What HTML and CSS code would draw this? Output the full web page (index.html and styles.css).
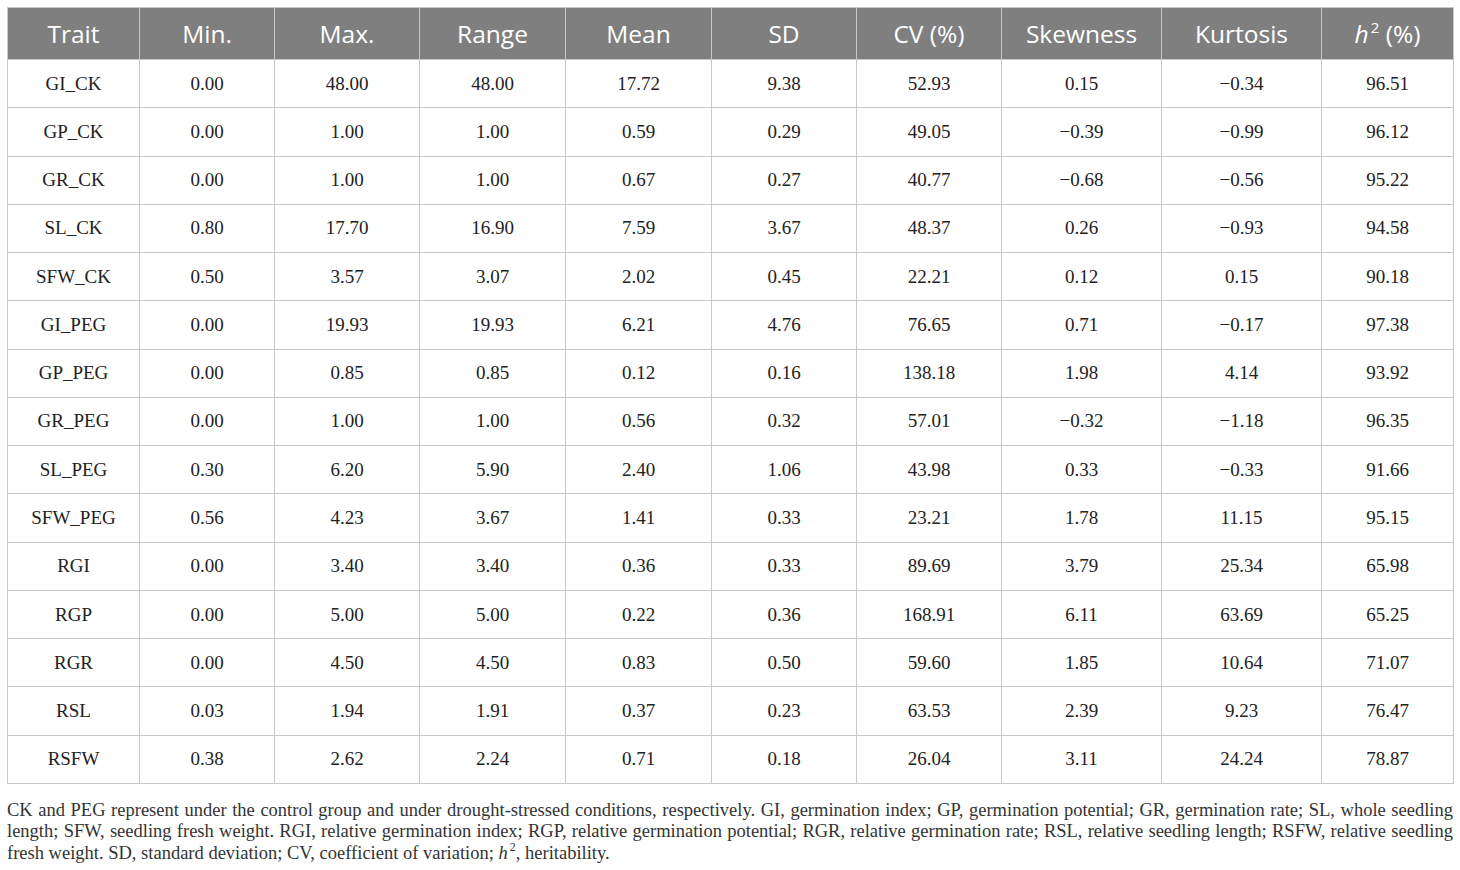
FILE: index.html
```html
<!DOCTYPE html>
<html>
<head>
<meta charset="utf-8">
<link rel="stylesheet" href="styles.css">
</head>
<body>
<div class="wrap">
<table class="stats">
<colgroup>
<col class="c-trait"><col class="c-min"><col class="c-max"><col class="c-range"><col class="c-mean"><col class="c-sd"><col class="c-cv"><col class="c-skew"><col class="c-kurt"><col class="c-h2">
</colgroup>
<thead>
<tr><th>Trait</th><th>Min.</th><th>Max.</th><th>Range</th><th>Mean</th><th>SD</th><th>CV (%)</th><th>Skewness</th><th>Kurtosis</th><th><i>h</i><sup>2</sup> (%)</th></tr>
</thead>
<tbody>
<tr><td>GI_CK</td><td>0.00</td><td>48.00</td><td>48.00</td><td>17.72</td><td>9.38</td><td>52.93</td><td>0.15</td><td>−0.34</td><td>96.51</td></tr>
<tr><td>GP_CK</td><td>0.00</td><td>1.00</td><td>1.00</td><td>0.59</td><td>0.29</td><td>49.05</td><td>−0.39</td><td>−0.99</td><td>96.12</td></tr>
<tr><td>GR_CK</td><td>0.00</td><td>1.00</td><td>1.00</td><td>0.67</td><td>0.27</td><td>40.77</td><td>−0.68</td><td>−0.56</td><td>95.22</td></tr>
<tr><td>SL_CK</td><td>0.80</td><td>17.70</td><td>16.90</td><td>7.59</td><td>3.67</td><td>48.37</td><td>0.26</td><td>−0.93</td><td>94.58</td></tr>
<tr><td>SFW_CK</td><td>0.50</td><td>3.57</td><td>3.07</td><td>2.02</td><td>0.45</td><td>22.21</td><td>0.12</td><td>0.15</td><td>90.18</td></tr>
<tr><td>GI_PEG</td><td>0.00</td><td>19.93</td><td>19.93</td><td>6.21</td><td>4.76</td><td>76.65</td><td>0.71</td><td>−0.17</td><td>97.38</td></tr>
<tr><td>GP_PEG</td><td>0.00</td><td>0.85</td><td>0.85</td><td>0.12</td><td>0.16</td><td>138.18</td><td>1.98</td><td>4.14</td><td>93.92</td></tr>
<tr><td>GR_PEG</td><td>0.00</td><td>1.00</td><td>1.00</td><td>0.56</td><td>0.32</td><td>57.01</td><td>−0.32</td><td>−1.18</td><td>96.35</td></tr>
<tr><td>SL_PEG</td><td>0.30</td><td>6.20</td><td>5.90</td><td>2.40</td><td>1.06</td><td>43.98</td><td>0.33</td><td>−0.33</td><td>91.66</td></tr>
<tr><td>SFW_PEG</td><td>0.56</td><td>4.23</td><td>3.67</td><td>1.41</td><td>0.33</td><td>23.21</td><td>1.78</td><td>11.15</td><td>95.15</td></tr>
<tr><td>RGI</td><td>0.00</td><td>3.40</td><td>3.40</td><td>0.36</td><td>0.33</td><td>89.69</td><td>3.79</td><td>25.34</td><td>65.98</td></tr>
<tr><td>RGP</td><td>0.00</td><td>5.00</td><td>5.00</td><td>0.22</td><td>0.36</td><td>168.91</td><td>6.11</td><td>63.69</td><td>65.25</td></tr>
<tr><td>RGR</td><td>0.00</td><td>4.50</td><td>4.50</td><td>0.83</td><td>0.50</td><td>59.60</td><td>1.85</td><td>10.64</td><td>71.07</td></tr>
<tr><td>RSL</td><td>0.03</td><td>1.94</td><td>1.91</td><td>0.37</td><td>0.23</td><td>63.53</td><td>2.39</td><td>9.23</td><td>76.47</td></tr>
<tr><td>RSFW</td><td>0.38</td><td>2.62</td><td>2.24</td><td>0.71</td><td>0.18</td><td>26.04</td><td>3.11</td><td>24.24</td><td>78.87</td></tr>
</tbody>
</table>
<p class="caption">CK and PEG represent under the control group and under drought-stressed conditions, respectively. GI, germination index; GP, germination potential; GR, germination rate; SL, whole seedling length; SFW, seedling fresh weight. RGI, relative germination index; RGP, relative germination potential; RGR, relative germination rate; RSL, relative seedling length; RSFW, relative seedling fresh weight. SD, standard deviation; CV, coefficient of variation; <i>h</i><sup>2</sup>, heritability.</p>
</div>
</body>
</html>
```

FILE: styles.css
```css
html, body {
  margin: 0;
  padding: 0;
  background: #ffffff;
}
.wrap {
  padding: 7px 7px 0 7px;
  width: 1446px;
}
.stats {
  width: 1446px;
  border-collapse: collapse;
  table-layout: fixed;
  border: 1px solid #c8c8c8;
}
.c-trait { width: 132px; }
.c-min { width: 135px; }
.c-max { width: 145px; }
.c-range { width: 146px; }
.c-mean { width: 146px; }
.c-sd { width: 145px; }
.c-cv { width: 145px; }
.c-skew { width: 160px; }
.c-kurt { width: 160px; }
.c-h2 { width: 132px; }
.stats th {
  background: #7f7f7f;
  color: #ffffff;
  font-family: "Open Sans", "Noto Sans", sans-serif;
  font-weight: 400;
  font-size: 24.5px;
  height: 51px;
  padding: 0;
  text-align: center;
  border: 1px solid #c8c8c8;
  border-top: none;
}
.stats th sup {
  font-size: 15px;
  vertical-align: 10px;
  line-height: 0;
  margin-left: 2px;
}
.stats td {
  font-family: "Liberation Serif", "Times New Roman", serif;
  font-size: 19px;
  color: #222222;
  text-align: center;
  height: 47.27px;
  padding: 0;
  border: 1px solid #c8c8c8;
}
.caption {
  margin: 16px 0 0 0;
  font-family: "Liberation Serif", "Times New Roman", serif;
  font-size: 18.5px;
  line-height: 21.5px;
  color: #333333;
  text-align: justify;
}
.caption sup {
  font-size: 12px;
  vertical-align: 8px;
  line-height: 0;
  margin-left: 2px;
}
```
